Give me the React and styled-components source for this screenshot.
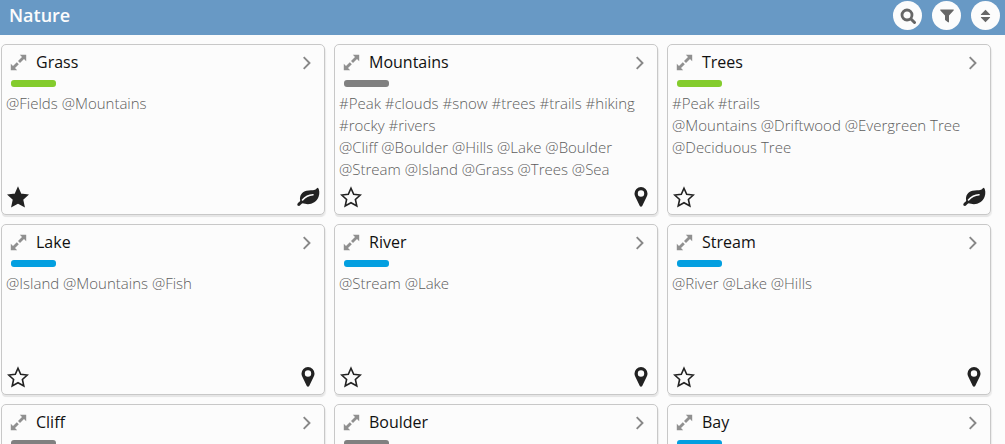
import React, { useState } from 'react';
import styled, { createGlobalStyle } from 'styled-components';

const GlobalStyle = createGlobalStyle`
  * {
    box-sizing: border-box;
  }

  body {
    margin: 0;
    background: #fcfcfc;
    font-family: "Open Sans", "Noto Sans", sans-serif;
  }
`;

const Page = styled.div`
  display: flex;
  flex-direction: column;
  height: 100vh;
  overflow: hidden;
`;

const Header = styled.header`
  display: flex;
  flex: none;
  align-items: flex-start;
  justify-content: space-between;
  height: 35px;
  padding: 0 5px 0 9px;
  background: #6899c5;
`;

const PageTitle = styled.h1`
  margin: 0;
  color: #fcfcfc;
  font-size: 18px;
  font-weight: 600;
  line-height: 31px;
`;

const Tools = styled.div`
  display: flex;
  gap: 10px;
  padding-top: 1px;
`;

const RoundButton = styled.button`
  display: flex;
  align-items: center;
  justify-content: center;
  width: 29px;
  height: 29px;
  padding: 0;
  border: none;
  border-radius: 50%;
  background: #fcfcfc;
  color: #666;
  cursor: pointer;
`;

const IconButton = styled.button`
  display: flex;
  padding: 0;
  border: none;
  background: none;
  color: ${props => props.$color || '#222'};
  cursor: pointer;
`;

const Grid = styled.main`
  display: grid;
  flex: 1;
  grid-template-columns: repeat(3, 1fr);
  grid-auto-rows: 171px;
  gap: 9px;
  min-height: 0;
  padding: 9px 14px 0 1px;
`;

const CardBox = styled.article`
  display: flex;
  flex-direction: column;
  border: 1px solid #c8c8c8;
  border-radius: 5px;
  background: #fcfcfc;
  box-shadow: 0 3px 0 -1px #e6e6e6, 1px 2px 1px #ececec;
`;

const CardHead = styled.div`
  display: flex;
  align-items: center;
  gap: 9px;
  height: 35px;
  padding: 0 12px 0 8px;
`;

const CardTitle = styled.h2`
  flex: 1;
  margin: 0;
  color: #111;
  font-size: 16px;
  font-weight: 500;
  line-height: 35px;
`;

const Bar = styled.div`
  width: 45px;
  height: 7px;
  margin-left: 9px;
  border-radius: 3px;
  background: ${props => props.$color};
`;

const Tags = styled.div`
  flex: 1;
  padding: 5px 4px 0;
  color: #5c5c5c;
  font-size: 15px;
  font-weight: 300;
  line-height: 22px;
`;

const CardFoot = styled.div`
  display: flex;
  align-items: center;
  justify-content: space-between;
  height: 22px;
  margin-bottom: 6px;
  padding: 0 4px 0 5px;
`;

const KindSlot = styled.span`
  display: flex;
  justify-content: center;
  padding-right: ${props => (props.$kind === 'place' ? '5px' : 0)};
  color: #222;
`;

const SearchIcon = () => (
  <svg width="16" height="16" viewBox="0 0 16 16" fill="none" stroke="currentColor" aria-hidden="true">
    <circle cx="7" cy="7" r="5" strokeWidth="2.800" />
    <path d="M11 11l3.500 3.500" strokeWidth="3" strokeLinecap="round" />
  </svg>
);

const FilterIcon = () => (
  <svg width="14" height="14" viewBox="0 0 14 14" fill="currentColor" aria-hidden="true">
    <path d="M.8.5h12.4c.6 0 .8.6.4 1.1L9 6.4v6.4c0 .6-.5.8-1 .5L5.400 11.200A1 1 0 0 1 5 10.400V6.400L.4 1.600C0 1.100.2.5.8.5z" />
  </svg>
);

const SortIcon = () => (
  <svg width="11" height="14" viewBox="0 0 12 14" fill="currentColor" aria-hidden="true">
    <path d="M6 .3 10.800 5c.5.5.2 1-.4 1H1.600C1 6 .7 5.500 1.200 5z" />
    <path d="M6 13.700 10.800 9c.5-.5.2-1-.4-1H1.600C1 8 .7 8.500 1.200 9z" />
  </svg>
);

const ExpandIcon = () => (
  <svg width="17" height="17" viewBox="0 0 17 17" fill="currentColor" aria-hidden="true">
    <path d="M9.800.8h6.400v6.400l-2.200-2.200-4 4-2-2 4-4z" />
    <path d="M7.200 16.200H.8V9.800L3 12l3.800-3.800 2 2L5 14z" />
  </svg>
);

const ChevronIcon = () => (
  <svg width="10" height="15" viewBox="0 0 10 15" fill="none" stroke="currentColor" strokeWidth="1.900" aria-hidden="true">
    <path d="M1.700 2.200 7.500 8l-5.800 5.800" />
  </svg>
);

const StarIcon = ({ filled }) => (
  <svg width="22" height="22" viewBox="0 0 22 22" fill={filled ? 'currentColor' : 'none'} stroke="currentColor" strokeWidth="1.600" strokeLinejoin="miter" aria-hidden="true">
    <path d="M11 2.200l2.700 6.100 6.600.7-4.900 4.500 1.400 6.500-5.800-3.300L5.200 20l1.400-6.500L1.700 9l6.600-.7z" />
  </svg>
);

const LeafIcon = () => (
  <svg width="24" height="20" viewBox="0 0 24 20" aria-hidden="true">
    <path
      fill="currentColor"
      d="M22 .8c1.500 2 1.800 5.700.6 9-1.800 4.700-6.200 7.400-10.700 7.400-2 0-3.900-1-5.200-1-1.400 0-2.200 2.700-3.700 2.700-1.300 0-2-1-1.600-2 .4-1.300 2.600-2 2.800-3.200C3.200 8.500 6 4.800 10.500 3.700c3-.7 6-.2 8.500-1C20.500 2.200 20.800.8 22 .8z"
    />
    <path d="M6.500 13C9.300 9.600 12.500 7.900 17 7.700" fill="none" stroke="#fcfcfc" strokeWidth="1.600" strokeLinecap="round" />
  </svg>
);

const PlaceIcon = () => (
  <svg width="14" height="20" viewBox="0 0 14 20" aria-hidden="true">
    <path fill="currentColor" fillRule="evenodd" d="M7 0a6.500 6.500 0 0 1 6.500 6.500c0 1-.2 2-.6 2.800L8.200 19c-.5 1-1.900 1-2.400 0L1.100 9.300C.7 8.500.5 7.500.5 6.500A6.500 6.500 0 0 1 7 0zm0 3.300a3.200 3.200 0 1 0 0 6.400 3.200 3.200 0 0 0 0-6.400z" />
  </svg>
);

const barColors = {
  green: '#84cc2d',
  grey: '#808080',
  blue: '#039fe0',
};

const items = [
  { title: 'Grass', bar: 'green', kind: 'plant', starred: true, links: '@Fields @Mountains' },
  {
    title: 'Mountains',
    bar: 'grey',
    kind: 'place',
    tags: '#Peak #clouds #snow #trees #trails #hiking #rocky #rivers',
    links: '@Cliff @Boulder @Hills @Lake @Boulder @Stream @Island @Grass @Trees @Sea',
  },
  {
    title: 'Trees',
    bar: 'green',
    kind: 'plant',
    tags: '#Peak #trails',
    links: '@Mountains @Driftwood @Evergreen Tree @Deciduous Tree',
  },
  { title: 'Lake', bar: 'blue', kind: 'place', links: '@Island @Mountains @Fish' },
  { title: 'River', bar: 'blue', kind: 'place', links: '@Stream @Lake' },
  { title: 'Stream', bar: 'blue', kind: 'place', links: '@River @Lake @Hills' },
  { title: 'Cliff', bar: 'grey', kind: 'place' },
  { title: 'Boulder', bar: 'grey', kind: 'place' },
  { title: 'Bay', bar: 'blue', kind: 'place' },
];

function Card({ item }) {
  const [starred, setStarred] = useState(Boolean(item.starred));

  return (
    <CardBox>
      <CardHead>
        <IconButton $color="#909090" aria-label={`Expand ${item.title}`}>
          <ExpandIcon />
        </IconButton>
        <CardTitle>{item.title}</CardTitle>
        <IconButton $color="#888" aria-label={`Open ${item.title}`}>
          <ChevronIcon />
        </IconButton>
      </CardHead>
      <Bar $color={barColors[item.bar]} />
      <Tags>
        {item.tags && <div>{item.tags}</div>}
        {item.links && <div>{item.links}</div>}
      </Tags>
      <CardFoot>
        <IconButton aria-label={`Star ${item.title}`} aria-pressed={starred} onClick={() => setStarred(!starred)}>
          <StarIcon filled={starred} />
        </IconButton>
        <KindSlot $kind={item.kind}>
          {item.kind === 'plant' ? <LeafIcon /> : <PlaceIcon />}
        </KindSlot>
      </CardFoot>
    </CardBox>
  );
}

function App() {
  return (
    <Page>
      <GlobalStyle />
      <Header>
        <PageTitle>Nature</PageTitle>
        <Tools>
          <RoundButton aria-label="Search">
            <SearchIcon />
          </RoundButton>
          <RoundButton aria-label="Filter">
            <FilterIcon />
          </RoundButton>
          <RoundButton aria-label="Sort">
            <SortIcon />
          </RoundButton>
        </Tools>
      </Header>
      <Grid>
        {items.map(item => (
          <Card key={item.title} item={item} />
        ))}
      </Grid>
    </Page>
  );
}

export default App;
